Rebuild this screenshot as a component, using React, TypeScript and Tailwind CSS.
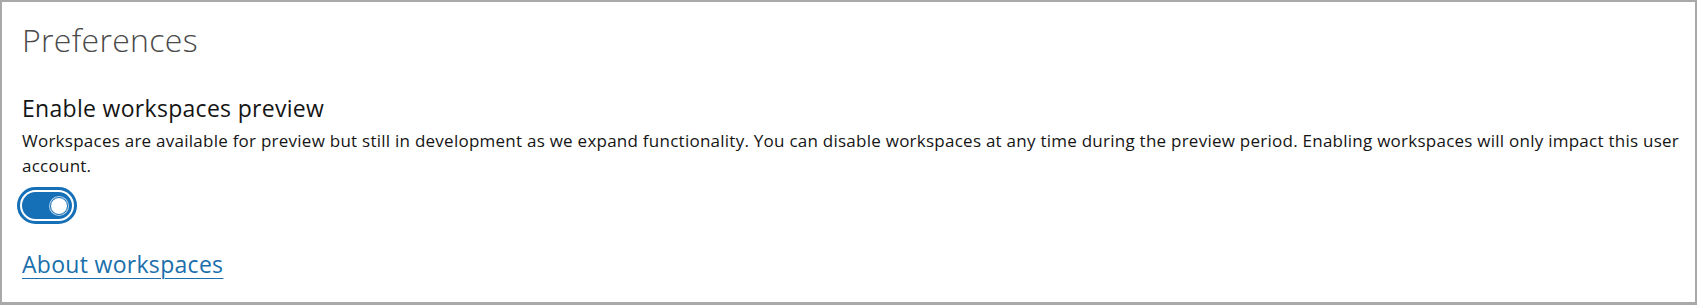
import React from "react";

export default function App() {
  return (
    <div className="w-[1697px] h-[305px] bg-white">
      <div
        className="h-full border-2 border-b-[3px] border-[#a9a9a9] pl-5 pr-2 pt-[18px] text-[#151515]"
        style={{ fontFamily: "'Open Sans', 'Noto Sans', sans-serif" }}
      >
        <h1 className="text-[32px] leading-[40px] font-light text-[#4a4a4a] tracking-[0.3px]">Preferences</h1>
        <h2 className="mt-[33px] text-[23px] leading-[30px] text-[#151515] tracking-[0.3px]">Enable workspaces preview</h2>
        <p className="mt-[5px] text-[17px] leading-[25px] text-[#151515] tracking-[0.25px]">
          Workspaces are available for preview but still in development as we expand functionality. You can disable workspaces at any time during the preview period. Enabling workspaces will only impact this user account.
        </p>
        <div className="mt-[9px] -ml-[5px] w-[60px] h-[37px] rounded-full border-[3px] border-[#1570b8] p-[2px]">
          <div className="w-full h-full rounded-full bg-[#1570b8] flex items-center justify-end pr-[4px]">
            <div className="w-[18px] h-[18px] rounded-full bg-white border border-[#1570b8] ring-1 ring-white/70" />
          </div>
        </div>
        <a href="#" className="inline-block mt-[25px] text-[23px] leading-[30px] text-[#1a6fac] underline underline-offset-[5px] decoration-1 tracking-[0.3px]">
          About workspaces
        </a>
      </div>
    </div>
  );
}
